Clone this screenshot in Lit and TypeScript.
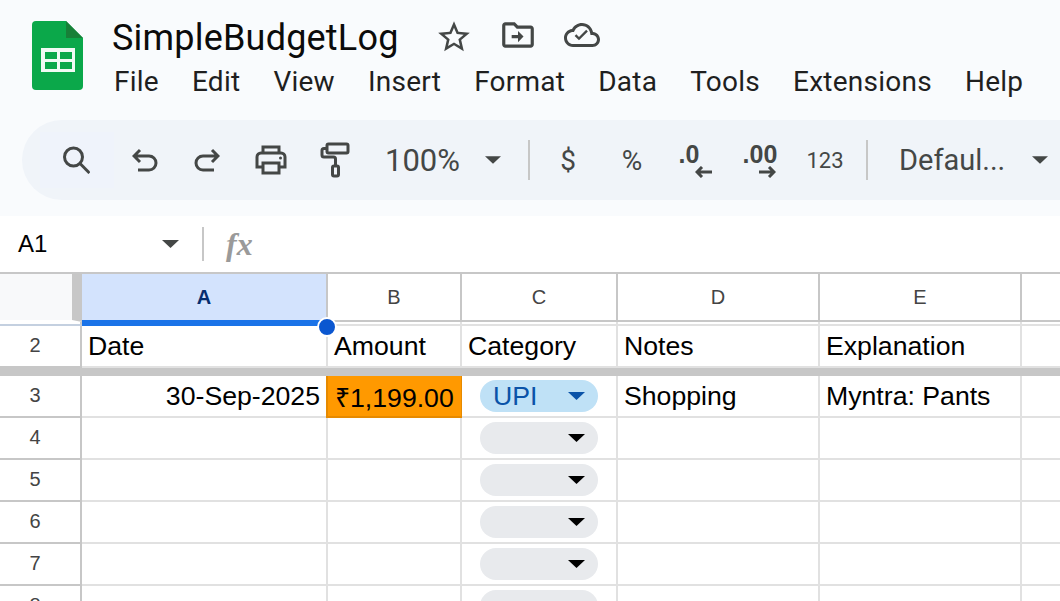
import { LitElement, css, html, svg } from "lit";
import { customElement } from "lit/decorators.js";

const MENU = ["File", "Edit", "View", "Insert", "Format", "Data", "Tools", "Extensions", "Help"];
const COLS = ["A", "B", "C", "D", "E", ""];

const caret = (w = 17, h = 8, cls = "caret") => html`<svg class=${cls} width=${w} height=${h} viewBox="0 0 17 8"><path d="M0 0h17L8.500 8z" fill="currentColor"/></svg>`;

const icon = (w: number, h: number, body: unknown) =>
  html`<svg width=${w} height=${h} viewBox="0 0 ${w} ${h}" fill="none" stroke="#444746" stroke-width="3">${body}</svg>`;

const SEARCH = icon(28, 28, svg`<circle cx="11.500" cy="11" r="9"/><path d="M18 17.500l9.500 9.500"/>`);
const UNDO = icon(26, 24, svg`<path d="M8 2L2 8l6 6M2 8h15a6.500 6.500 0 0 1 0 14H6"/>`);
const REDO = icon(26, 24, svg`<path d="M18 2l6 6-6 6M24 8H9a6.500 6.500 0 0 0 0 14h11"/>`);
const PRINT = icon(32, 30, svg`<path d="M8 8V2h16v6M8 22H2V12a4 4 0 0 1 4-4h20a4 4 0 0 1 4 4v10h-6"/><path d="M8 18h16v10H8z"/><circle cx="25.500" cy="13" r="1.500" fill="#444746" stroke="none"/>`);
const PAINT = icon(30, 36, svg`<rect x="7" y="2" width="21" height="9" rx="1.500"/><path d="M7 6.500H4a2 2 0 0 0-2 2V13a2 2 0 0 0 2 2h9.500a2 2 0 0 1 2 2v7"/><rect x="12.500" y="24" width="6" height="10" rx="1.500"/>`);

const FOLDER = html`<svg width="38" height="38" viewBox="0 0 24 24" fill="#444746"><path d="M20 6h-8l-2-2H4c-1.100 0-2 .9-2 2v12c0 1.100.9 2 2 2h16c1.100 0 2-.9 2-2V8c0-1.100-.9-2-2-2zm0 12H4V6h5.200l2 2H20v10zm-8-4H8v-2h4V9.500l3.500 3.500-3.500 3.500V14z"/></svg>`;
const STAR = html`<svg width="38" height="38" viewBox="0 0 24 24" fill="#444746"><path d="M22 9.240l-7.190-.62L12 2 9.190 8.630 2 9.240l5.460 4.730L5.820 21 12 17.270 18.180 21l-1.630-7.030L22 9.240zM12 15.400l-3.760 2.270 1-4.280-3.320-2.880 4.380-.38L12 6.100l1.710 4.040 4.380.38-3.320 2.880 1 4.280L12 15.400z"/></svg>`;
const CLOUD = html`<svg width="36" height="36" viewBox="0 0 24 24" fill="#444746"><path d="M19.350 10.040C18.670 6.590 15.640 4 12 4 9.110 4 6.600 5.640 5.350 8.040 2.340 8.360 0 10.910 0 14c0 3.310 2.690 6 6 6h13c2.760 0 5-2.240 5-5 0-2.640-2.050-4.780-4.650-4.960zM19 18H6c-2.210 0-4-1.790-4-4 0-2.050 1.530-3.760 3.560-3.970l1.070-.11.5-.95C8.080 7.140 9.940 6 12 6c2.620 0 4.880 1.860 5.390 4.430l.3 1.500 1.530.11c1.560.1 2.780 1.410 2.780 2.960 0 1.650-1.350 3-3 3zm-9-2.500l-2.900-2.900 1.100-1.100 1.800 1.800 4.800-4.800 1.100 1.100z"/></svg>`;

const LOGO = html`<svg width="51" height="69" viewBox="0 0 51 69"><path d="M4 0h30l17 17v48a4 4 0 0 1-4 4H4a4 4 0 0 1-4-4V4a4 4 0 0 1 4-4z" fill="#0ba84a"/><path d="M34 0l17 17H34z" fill="#188038"/><path d="M9 27h34v24H9z" fill="#f1faf4"/><path d="M13 31h12v7H13zM28 31h12v7H28zM13 41h12v7H13zM28 41h12v7H28z" fill="#0ba84a"/></svg>`;

@customElement("app-root")
export class AppRoot extends LitElement {
  static styles = css`
    :host {
      display: block;
      width: 1060px;
      height: 601px;
      overflow: hidden;
      background: #fff;
      font-family: "Liberation Sans", Arial, sans-serif;
      color: #000;
    }
    .chrome {
      background: #f9fbfd;
      height: 216px;
      box-sizing: border-box;
      padding-top: 21px;
      font-family: Roboto, sans-serif;
    }
    .head {
      display: flex;
      padding-left: 32px;
      height: 99px;
    }
    .titles {
      margin-left: 29px;
    }
    .title-row {
      display: flex;
      align-items: center;
      height: 32px;
    }
    .title {
      font-size: 36px;
      letter-spacing: 0.2px;
      color: #0b0b0b;
      width: 323px;
      padding-top: 1px;
    }
    .title-row svg {
      flex: none;
    }
    .title-row .move { margin-left: 26px; }
    .title-row .cloud { margin-left: 27px; }
    .menu {
      display: flex;
      gap: 33px;
      margin: 11px 0 0 2px;
      font-size: 28px;
      letter-spacing: 0.25px;
      color: #1f1f1f;
      line-height: 36px;
    }
    .toolbar {
      display: flex;
      align-items: center;
      height: 80px;
      margin-left: 22px;
      padding-left: 18px;
      background: #f0f4f9;
      border-radius: 40px 0 0 40px;
      color: #444746;
      white-space: nowrap;
    }
    .tb {
      display: flex;
      align-items: center;
      justify-content: center;
      flex: none;
      height: 56px;
    }
    .search { width: 74px; background: #eff3fb; box-sizing: border-box; padding-right: 3px; }
    .w62 { width: 62px; }
    .w64 { width: 64px; }
    .w66 { width: 66px; }
    .zoom {
      width: 90px;
      margin-left: 19px;
      justify-content: flex-start;
      font-size: 31px;
    }
    .tb-caret { width: 36px; }
    .sep {
      flex: none;
      width: 2px;
      height: 40px;
      background: #c7c7c7;
    }
    .sym { font-size: 28px; }
    .dec {
      position: relative;
      width: 64px;
      font-weight: 700;
      font-size: 25px;
      align-items: flex-start;
      padding-top: 8px;
      box-sizing: border-box;
      font-family: "Liberation Sans", sans-serif;
    }
    .dec.one { padding-right: 14px; }
    .dec svg { position: absolute; bottom: 10px; right: 16px; }
    .num { font-size: 22px; width: 66px; }
    .font-name {
      width: 123px;
      margin-left: 31px;
      justify-content: flex-start;
      font-size: 29px;
    }
    .namebar {
      display: flex;
      align-items: center;
      height: 56px;
      padding-left: 18px;
    }
    .cellref {
      width: 144px;
      font-size: 24px;
    }
    .namebar .caret { color: #444746; }
    .namebar .sep { height: 34px; margin-left: 23px; }
    .fx {
      margin-left: 22px;
      font: italic 700 32px "Liberation Serif", serif;
      color: #9a9a9a;
    }
    .sheet {
      display: grid;
      grid-template-columns: 82px 246px 134px 156px 202px 202px 1fr;
      border-top: 2px solid #c7c7c7;
    }
    .corner {
      height: 46px;
      background: #f8f9fa;
      border-right: 10px solid #c7c7c7;
      border-bottom: 2px solid #fff;
      box-sizing: content-box;
      width: 72px;
    }
    .colhead {
      position: relative;
      height: 46px;
      display: flex;
      align-items: center;
      justify-content: center;
      box-sizing: content-box;
      border-bottom: 2px solid #c7c7c7;
      border-right: 2px solid #c7c7c7;
      font-size: 20px;
      color: #444;
    }
    .colhead.last { border-right: 0; }
    .colhead.sel {
      background: #d3e3fd;
      color: #062e6f;
      font-weight: 700;
      box-sizing: content-box;
    }
    .selbar {
      position: absolute;
      left: 0;
      right: 0;
      top: 46px;
      height: 6px;
      background: #1a73e8;
      z-index: 2;
    }
    .seldot {
      position: absolute;
      right: -11px;
      top: 43px;
      width: 16px;
      height: 16px;
      background: #0b57d0;
      border: 2px solid #fff;
      border-radius: 50%;
      z-index: 3;
    }
    .rh {
      display: flex;
      align-items: center;
      justify-content: center;
      box-sizing: border-box;
      padding: 0 10px 2px 0;
      height: 42px;
      border-right: 2px solid #c7c7c7;
      border-bottom: 2px solid #c7c7c7;
      font-size: 20px;
      color: #444;
    }
    .cell {
      display: flex;
      align-items: center;
      box-sizing: border-box;
      height: 42px;
      padding: 1px 6px 0;
      border-right: 2px solid #e1e1e1;
      border-bottom: 2px solid #e1e1e1;
      font-size: 26.670px;
      white-space: nowrap;
      overflow: hidden;
    }
    .cell.last { border-right: 0; }
    .hidden-row {
      height: 4px;
      box-sizing: border-box;
      border-bottom: 2px solid #e1e1e1;
      border-right: 2px solid #e1e1e1;
    }
    .hidden-row.last { border-right: 0; }
    .hidden-row.rhs { border-color: #c4d0e0; border-right-color: #c7c7c7; }
    .band {
      grid-column: 1 / -1;
      height: 8px;
      background: #c7c7c7;
    }
    .right { justify-content: flex-end; }
    .amount {
      background: #f90;
      border: 2px solid #e68a00;
      border-top: 0;
      border-right-width: 1px;
      padding: 1px 6px 0 7px;
      margin-left: -2px;
    }
    .cell.chipcell { padding: 0 18px; }
    .chip {
      flex: 1;
      display: flex;
      align-items: center;
      justify-content: space-between;
      box-sizing: border-box;
      height: 32px;
      padding: 0 13px;
      border-radius: 16px;
      background: #e8eaed;
      color: #000;
      font-size: 26.670px;
    }
    .chip.upi {
      background: #bfe1f6;
      color: #0a53a8;
    }
    .chip .caret { margin-left: auto; }
  `;

  private chip(label = "") {
    return html`<div class="cell chipcell"><div class="chip ${label ? "upi" : ""}">${label}${caret()}</div></div>`;
  }

  private emptyRow(n: number) {
    return html`<div class="rh">${n}</div><div class="cell"></div><div class="cell"></div>${this.chip()}<div class="cell"></div><div class="cell"></div><div class="cell last"></div>`;
  }

  render() {
    return html`
      <div class="chrome">
        <div class="head">
          ${LOGO}
          <div class="titles">
            <div class="title-row">
              <div class="title">SimpleBudgetLog</div>
              ${STAR}<span class="move">${FOLDER}</span><span class="cloud">${CLOUD}</span>
            </div>
            <div class="menu">${MENU.map((m) => html`<span>${m}</span>`)}</div>
          </div>
        </div>
        <div class="toolbar">
          <div class="tb search">${SEARCH}</div>
          <div class="tb w62">${UNDO}</div>
          <div class="tb w62">${REDO}</div>
          <div class="tb w66">${PRINT}</div>
          <div class="tb w62">${PAINT}</div>
          <div class="tb zoom">100%</div>
          <div class="tb tb-caret">${caret(16, 8)}</div>
          <div class="sep" style="margin-left:17px"></div>
          <div class="tb w64 sym" style="margin-left:6px">$</div>
          <div class="tb w64 sym">%</div>
          <div class="tb dec one">.0<svg width="17" height="12" viewBox="0 0 17 12" fill="none" stroke="#444746" stroke-width="3"><path d="M7 1L2 6l5 5M2 6h15"/></svg></div>
          <div class="tb dec">.00<svg width="17" height="12" viewBox="0 0 17 12" fill="none" stroke="#444746" stroke-width="3"><path d="M10 1l5 5-5 5M15 6H0"/></svg></div>
          <div class="tb num">123</div>
          <div class="sep" style="margin-left:8px"></div>
          <div class="tb font-name">Defaul...</div>
          <div class="tb tb-caret">${caret(16, 8)}</div>
        </div>
      </div>
      <div class="namebar">
        <div class="cellref">A1</div>
        ${caret()}
        <div class="sep"></div>
        <div class="fx">fx</div>
      </div>
      <div class="sheet">
        <div class="corner"></div>
        ${COLS.map(
          (c, i) => html`<div class="colhead ${i === 0 ? "sel" : ""} ${i === 5 ? "last" : ""}">
            ${c}${i === 0 ? html`<div class="selbar"></div><div class="seldot"></div>` : ""}
          </div>`
        )}
        <div class="hidden-row rhs"></div>
        ${COLS.map((_, i) => html`<div class="hidden-row ${i === 5 ? "last" : ""}"></div>`)}

        <div class="rh">2</div>
        <div class="cell">Date</div>
        <div class="cell">Amount</div>
        <div class="cell">Category</div>
        <div class="cell">Notes</div>
        <div class="cell">Explanation</div>
        <div class="cell last"></div>
        <div class="band"></div>

        <div class="rh">3</div>
        <div class="cell right">30-Sep-2025</div>
        <div class="cell amount">₹1,199.00</div>
        ${this.chip("UPI")}
        <div class="cell">Shopping</div>
        <div class="cell">Myntra: Pants</div>
        <div class="cell last"></div>

        ${[4, 5, 6, 7, 8].map((n) => this.emptyRow(n))}
      </div>
    `;
  }
}
